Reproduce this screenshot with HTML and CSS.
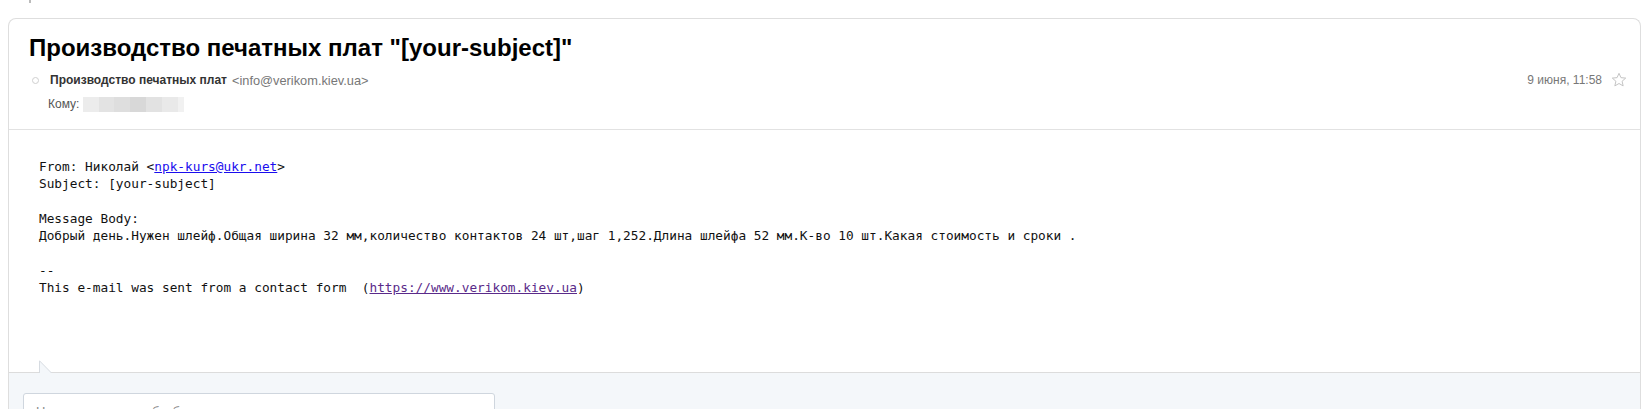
FILE: index.html
```html
<!DOCTYPE html>
<html lang="ru">
<head>
<meta charset="utf-8">
<title>Письмо</title>
<link rel="stylesheet" href="styles.css">
</head>
<body>
<div class="topmark"></div>
<div class="card">
  <div class="head">
    <h1 class="subject">Производство печатных плат "[your-subject]"</h1>
    <div class="from-row">
      <span class="dot"></span>
      <span class="sender">Производство печатных плат</span>
      <span class="email">&lt;info@verikom.kiev.ua&gt;</span>
      <span class="spacer"></span>
      <span class="date">9 июня, 11:58</span>
      <svg class="star" width="16" height="16" viewBox="0 0 16 16"><path d="M8 1.3l1.95 4.35 4.75.45-3.6 3.15 1.05 4.65L8 11.5l-4.15 2.4 1.05-4.65L1.3 6.1l4.75-.45z" fill="none" stroke="#c4c4c4" stroke-width="1"/></svg>
    </div>
    <div class="to-row">
      <span class="to-label">Кому:</span>
      <span class="blur"></span>
    </div>
  </div>
  <div class="body">
<pre class="msg">From: Николай &lt;<a class="link" href="#">npk-kurs@ukr.net</a>&gt;
Subject: [your-subject]

Message Body:
Добрый день.Нужен шлейф.Общая ширина 32 мм,количество контактов 24 шт,шаг 1,252.Длина шлейфа 52 мм.К-во 10 шт.Какая стоимость и сроки .

--
This e-mail was sent from a contact form  (<a class="link visited" href="#">https://www.verikom.kiev.ua</a>)</pre>
  </div>
  <div class="reply">
    <svg class="tail" width="14" height="14" viewBox="0 0 14 14"><path d="M0 14V0.5L13.5 14z" fill="#f4f7fa"/><path d="M0.5 13V0.8L12.5 13" fill="none" stroke="#d6dbe1" stroke-width="1"/></svg>
    <div class="reply-box">Нажмите сюда, чтобы быстро ответить</div>
  </div>
</div>
</body>
</html>
```
FILE: styles.css
```css
html, body {
  margin: 0;
  padding: 0;
  background: #fff;
  overflow: hidden;
}
body {
  font-family: "Liberation Sans", Arial, sans-serif;
  height: 409px;
  position: relative;
}
.topmark {
  position: absolute;
  left: 29px;
  top: 0;
  width: 2px;
  height: 3px;
  background: #bbb;
}
.card {
  margin: 18px 7px 0 8px;
  border: 1px solid #dedede;
  border-bottom: none;
  border-radius: 8px 8px 0 0;
  background: #fff;
}
.head {
  padding: 14px 20px 0 20px;
  height: 111px;
  border-bottom: 1px solid #e2e2e2;
  box-sizing: border-box;
}
.subject {
  margin: 0;
  font-size: 24px;
  line-height: 30px;
  font-weight: bold;
  color: #000;
}
.from-row {
  display: flex;
  align-items: center;
  margin-top: 9px;
  height: 16px;
  font-size: 12px;
}
.dot {
  width: 5px;
  height: 5px;
  border: 1px solid #cfcfcf;
  border-radius: 50%;
  margin: 0 11px 0 3px;
}
.sender {
  font-weight: bold;
  color: #333;
}
.email {
  color: #777;
  margin-left: 5px;
  font-size: 12.8px;
}
.spacer { flex: 1; }
.date {
  color: #777;
  margin-right: 9px;
}
.star { margin-right: -7px; }
.to-row {
  display: flex;
  align-items: center;
  margin-top: 8px;
  padding-left: 19px;
  font-size: 12px;
  height: 16px;
}
.to-label { color: #555; margin-right: 4px; }
.blur {
  width: 101px;
  height: 15px;
  background: linear-gradient(90deg, #ececec 0 16%, #e3e3e3 16% 31%, #dedede 31% 47%, #d8d8d8 47% 62%, #e2e2e2 62% 78%, #e9e9e9 78% 94%, #f1f1f1 94%);
}
.body {
  height: 242px;
  padding: 28px 30px 0 30px;
  box-sizing: border-box;
}
.msg {
  margin: 0;
  font-family: "DejaVu Sans Mono", "Liberation Mono", monospace;
  font-size: 12.77px;
  line-height: 17.3px;
  color: #111;
}
.link { color: #1a0dee; text-decoration: underline; }
.link.visited { color: #5a2a8a; }
.reply {
  position: relative;
  border-top: 1px solid #dcdcdc;
  background: #f4f7fa;
  height: 60px;
  padding: 20px 0 0 14px;
  box-sizing: border-box;
}
.tail {
  position: absolute;
  left: 30px;
  top: -13px;
  display: block;
}
.reply-box {
  width: 472px;
  height: 40px;
  box-sizing: border-box;
  background: #fff;
  border: 1px solid #cfd6de;
  border-radius: 3px;
  padding: 10px 12px;
  font-size: 13px;
  line-height: 15px;
  color: #8a8a8a;
}
```
